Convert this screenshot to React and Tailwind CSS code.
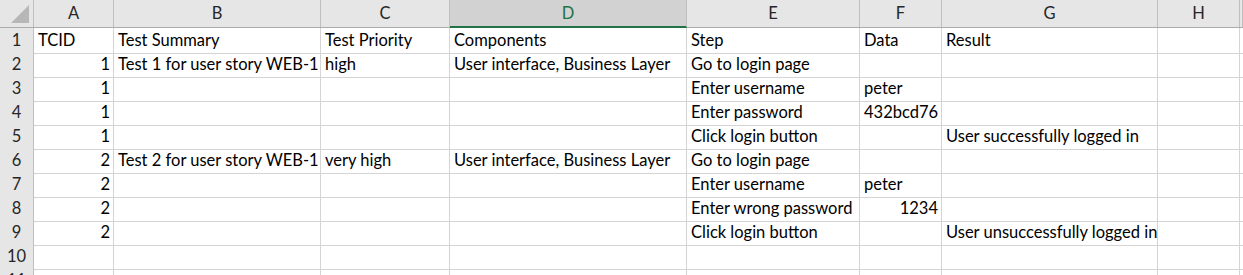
import React from "react";

const cols = ["A", "B", "C", "D", "E", "F", "G", "H", ""];
const rows = [
  ["TCID", "Test Summary", "Test Priority", "Components", "Step", "Data", "Result", "", ""],
  [1, "Test 1 for user story WEB-1", "high", "User interface, Business Layer", "Go to login page", "", "", "", ""],
  [1, "", "", "", "Enter username", "peter", "", "", ""],
  [1, "", "", "", "Enter password", "432bcd76", "", "", ""],
  [1, "", "", "", "Click login button", "", "User successfully logged in", "", ""],
  [2, "Test 2 for user story WEB-1", "very high", "User interface, Business Layer", "Go to login page", "", "", "", ""],
  [2, "", "", "", "Enter username", "peter", "", "", ""],
  [2, "", "", "", "Enter wrong password", 1234, "", "", ""],
  [2, "", "", "", "Click login button", "", "User unsuccessfully logged in", "", ""],
  ["", "", "", "", "", "", "", "", ""],
  ["", "", "", "", "", "", "", "", ""],
];

const grid = "grid grid-cols-[34px_80px_207px_129px_237px_173px_82px_216px_82px_1fr]";

export default function App() {
  return (
    <div
      className="w-[1243px] h-[275px] overflow-hidden bg-white text-black"
      style={{ fontFamily: "Lato, 'Open Sans', sans-serif" }}
    >
      <div className={`${grid} h-[28px] bg-[#e6e6e6] border-b border-[#ababab]`}>
        <div className="relative border-r border-[#bfbfbf]">
          <div className="absolute right-[4px] bottom-[4px] w-0 h-0 border-l-[18px] border-l-transparent border-b-[18px] border-b-[#b7b7b7]" />
        </div>
        {cols.map((c, i) =>
          c === "D" ? (
            <div
              key={i}
              className="flex items-center justify-center bg-[#d2d2d2] text-[#217346] text-[16.5px] border-r border-[#bfbfbf] border-b-2 border-b-[#217346] -mb-px"
            >
              {c}
            </div>
          ) : (
            <div
              key={i}
              className="flex items-center justify-center text-[16.5px] text-[#262626] border-r border-[#bfbfbf]"
            >
              {c}
            </div>
          )
        )}
      </div>
      {rows.map((r, ri) => (
        <div key={ri} className={`${grid} h-[24px]`}>
          <div className="flex items-center justify-center bg-[#e6e6e6] text-[16.5px] text-[#262626] border-r border-b border-[#bfbfbf]">
            {ri + 1}
          </div>
          {r.map((v, ci) => (
            <div
              key={ci}
              className={`flex items-center text-[16.5px] whitespace-nowrap overflow-hidden border-r border-b border-[#d4d4d4] ${
                typeof v === "number" ? "justify-end pr-[3px]" : "pl-[4px]"
              }`}
            >
              {v}
            </div>
          ))}
        </div>
      ))}
    </div>
  );
}
